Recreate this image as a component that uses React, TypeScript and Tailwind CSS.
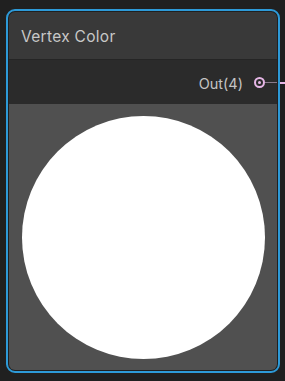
export default function App() {
  return (
    <div className="w-[285px] h-[381px] bg-[#202020] pt-[9px] pl-[6px] relative overflow-hidden" style={{ fontFamily: "Inter, 'Noto Sans', sans-serif" }}>
      <div className="w-[274px] h-[364px] border-2 border-[#2d9ad8] rounded-[9px] p-px">
        <div className="h-full rounded-[6px] overflow-hidden flex flex-col">
          <div className="h-[48px] bg-[#393939] flex items-center pl-[12px] pt-[3px] border-b border-[#252525]">
            <span className="text-[15.5px] text-[#c8c8c8] tracking-[0.3px]">Vertex Color</span>
          </div>
          <div className="h-[44px] bg-[#2b2b2b] flex items-center justify-end pr-[34px]">
            <span className="text-[14.5px] text-[#c4c4c4] mt-[4px]">Out(4)</span>
          </div>
          <div className="flex-1 bg-[#505050] flex items-center justify-center">
            <div className="w-[243px] h-[243px] rounded-full bg-white" />
          </div>
        </div>
      </div>
      {/* output port */}
      <div className="absolute left-[254px] top-[77px] w-[11px] h-[11px] rounded-full border-2 border-[#e6b6e6] flex items-center justify-center">
        <div className="w-[3px] h-[3px] rounded-full bg-[#e6b6e6]" />
      </div>
      <div className="absolute left-[265px] top-[82px] w-[12px] h-px bg-[#8a7a8a]" />
      <div className="absolute left-[280px] top-[82px] w-[5px] h-[2px] bg-[#e6b6e6]" />
    </div>
  );
}
